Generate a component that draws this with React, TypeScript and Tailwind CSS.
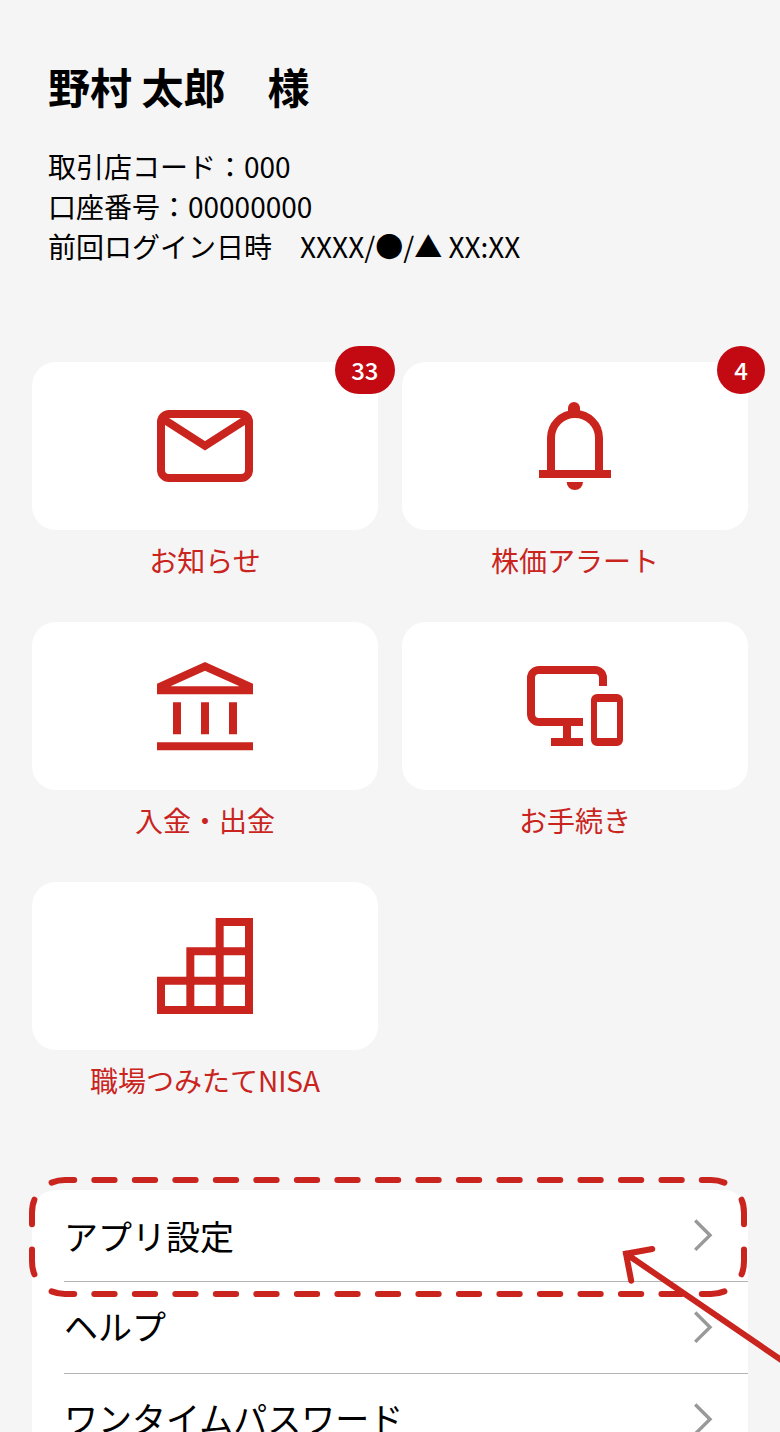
import type { ReactNode } from "react";

type Tile = {
  label: string;
  icon: ReactNode;
  badge?: string;
};

const tiles: Tile[] = [
  { label: "お知らせ", icon: <MailIcon />, badge: "33" },
  { label: "株価アラート", icon: <BellIcon />, badge: "4" },
  { label: "入金・出金", icon: <BankIcon /> },
  { label: "お手続き", icon: <DevicesIcon /> },
  { label: "職場つみたてNISA", icon: <BlocksIcon /> },
];

const menuItems = ["アプリ設定", "ヘルプ", "ワンタイムパスワード"];

function MailIcon() {
  return (
    <svg className="size-24" viewBox="0 0 96 96" fill="none" stroke="currentColor" strokeWidth="8">
      <rect x="4" y="16" width="88" height="64" rx="8" />
      <path d="M4 19.7 L48 47.75 L92 19.7" />
    </svg>
  );
}

function BellIcon() {
  return (
    <svg className="size-24" viewBox="0 0 96 96" fill="currentColor">
      <path d="M41 14V10a6 6 0 0 1 12 0V14Z" />
      <path d="M24 76V40a24 24 0 0 1 48 0V76" fill="none" stroke="currentColor" strokeWidth="8" />
      <path d="M12 72H84V80H12Z" />
      <path d="M39.7 84H56a8.15 8 0 0 1-16.3 0Z" />
    </svg>
  );
}

function BankIcon() {
  return (
    <svg className="size-24" viewBox="0 0 96 96" fill="currentColor">
      <path
        fillRule="evenodd"
        d="M48 4L96 25.8V36.3H0V25.8ZM48 12.8L13.5 28.3H82.5Z"
      />
      <path d="M16 44.3h8v32h-8ZM44 44.3h8v32h-8ZM72 44.3h8v32h-8ZM0 84.3h96v8H0Z" />
    </svg>
  );
}

function DevicesIcon() {
  return (
    <svg className="size-24" viewBox="0 0 96 96" fill="currentColor">
      <path
        d="M76 28V20a8 8 0 0 0-8-8H12a8 8 0 0 0-8 8V56a8 8 0 0 0 8 8H56"
        fill="none"
        stroke="currentColor"
        strokeWidth="8"
      />
      <path d="M36 68h8v12h12v8H24v-8h12Z" />
      <path
        fillRule="evenodd"
        d="M70 36h20a6 6 0 0 1 6 6v40a6 6 0 0 1-6 6H70a6 6 0 0 1-6-6V42a6 6 0 0 1 6-6ZM70 44v36h20V44Z"
      />
    </svg>
  );
}

function BlocksIcon() {
  return (
    <svg className="size-24" viewBox="0 0 96 96" fill="none" stroke="currentColor" strokeWidth="8">
      <path d="M4 92V62.67H33.33V33.33H62.67V4H92V92Z" />
      <path d="M33.33 92V62.67H92M62.67 92V33.33H92" />
    </svg>
  );
}

function TileButton({ tile }: { tile: Tile }) {
  return (
    <button className="flex h-[260px] flex-col text-[#c9241e]">
      <div className="relative flex h-[168px] w-full items-center justify-center rounded-3xl bg-white">
        {tile.icon}
        {tile.badge && (
          <span className="absolute -top-4 -right-[17px] flex h-12 min-w-12 items-center justify-center rounded-full bg-[#c30a13] px-[16.5px] text-2xl font-medium text-white">
            {tile.badge}
          </span>
        )}
      </div>
      <span className="mt-2.5 w-full text-center text-[28px] leading-10">{tile.label}</span>
    </button>
  );
}

// dashed frame round the first menu row, plus the arrow that points at it
function Callout() {
  return (
    <svg
      className="pointer-events-none absolute top-0 left-0"
      width="780"
      height="242"
      viewBox="0 1190 780 242"
      overflow="visible"
      fill="none"
      stroke="#c9241e"
      strokeWidth="6"
      strokeLinecap="round"
    >
      <path d="M94.3 1180H682M94.3 1294H682" strokeDasharray="20.3 20.21" />
      <path d="M51.6 1182.6Q58 1180 65 1180H74.2M724.4 1182.6Q718 1180 711 1180H701.8" />
      <path d="M51.6 1291.4Q58 1294 65 1294H74.2M724.4 1291.4Q718 1294 711 1294H701.8" />
      <path d="M34.4 1199.7C32.5 1204 32 1208 32 1213V1224.3M741.6 1199.7C743.5 1204 744 1208 744 1213V1224.3" />
      <path d="M34.4 1274.3C32.5 1270 32 1266 32 1261V1249.6M741.6 1274.3C743.5 1270 744 1266 744 1261V1249.6" />
      <path d="M652.3 1249L626 1253.7L631.2 1280.8M626 1253.7L786 1363.3" />
    </svg>
  );
}

export default function App() {
  return (
    <div className="h-[1432px] w-[780px] overflow-hidden bg-[#f5f5f5] font-['Noto_Sans_CJK_JP',sans-serif] text-black">
      <header className="h-[362px] px-12 pt-14">
        <h1 className="text-[42px] leading-[60px] font-bold whitespace-pre">野村 太郎　様</h1>
        <div className="mt-[30px] text-[28px] leading-10">
          <p>取引店コード：000</p>
          <p>口座番号：00000000</p>
          <p>前回ログイン日時　XXXX/●/▲ XX:XX</p>
        </div>
      </header>

      <main className="grid h-[828px] grid-cols-2 content-start gap-x-6 px-8">
        {tiles.map((tile) => (
          <TileButton key={tile.label} tile={tile} />
        ))}
      </main>

      <section className="relative px-8">
        <ul className="rounded-t-3xl bg-white pl-8">
          {menuItems.map((item) => (
            <li
              key={item}
              className="group flex h-[92px] items-center justify-between border-b border-[#b3b3b3] pr-[34px] text-[34px]"
            >
              <span className="mb-1 leading-[50px] group-first:mb-0">{item}</span>
              <svg className="mb-px h-9 w-5" viewBox="0 0 20 36" fill="none" stroke="#999" strokeWidth="3.4">
                <path d="M1.2 3.5L16 18.2L1.2 32.9" />
              </svg>
            </li>
          ))}
        </ul>
        <Callout />
      </section>
    </div>
  );
}
